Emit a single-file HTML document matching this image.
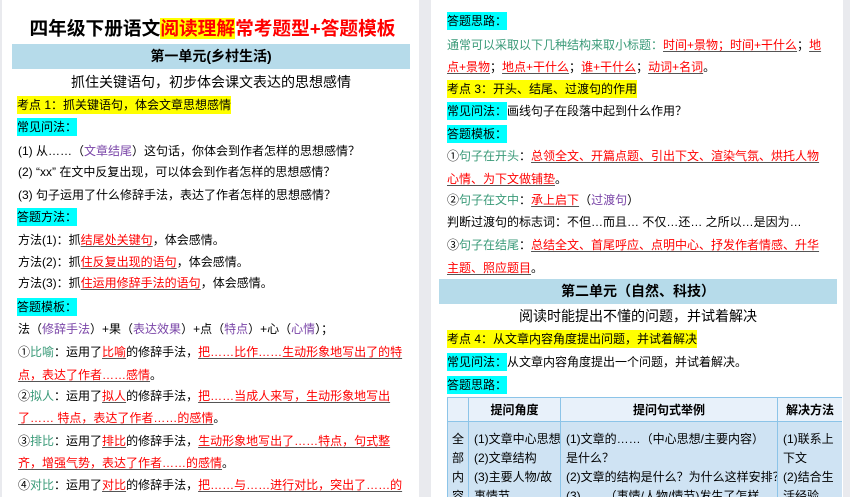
<!DOCTYPE html>
<html><head><meta charset="utf-8"><style>
html,body{margin:0;width:850px;height:497px;overflow:hidden}
body{background:#e9eaee;font-family:"Liberation Sans","Noto Sans CJK SC",sans-serif;color:#000;position:relative}
.pg{position:absolute;top:0;height:497px;background:#fff}
.l{position:absolute;white-space:nowrap;font-size:12px;line-height:18px;height:18px}
.y{background:#ffff00}
.c{background:#00ffff}
span.c{display:inline-block;height:18px;line-height:18px}
.r{color:#f00;text-decoration:underline;text-decoration-color:#555;text-underline-offset:2px}
.g{color:#3a9a78}
.p{color:#7a45a8}
.bar{position:absolute;background:#b6dbea;font-weight:bold;font-size:14px;text-align:center;line-height:25px;height:25px}
.sub{position:absolute;font-size:14px;text-align:center;line-height:20px}
.tw{position:absolute;left:447px;top:397px;width:395px;height:100px;overflow:hidden}
table{border-collapse:collapse;font-size:12px;table-layout:fixed;width:395px}
td,th{border:1.5px solid #8cc4e8;vertical-align:top;padding:0 5px;white-space:nowrap;overflow:hidden}
th{background:#e8f1fa;height:23px;vertical-align:middle;font-weight:bold}
td{background:#cfe3f3;line-height:19px;padding-top:8px}
</style></head><body>
<div class="pg" style="left:2px;width:417px"></div>
<div class="pg" style="left:431px;width:412px"></div>

<div style="position:absolute;left:0;width:425px;top:16px;text-align:center;font-size:18.7px;font-weight:bold;line-height:26px">四年级下册语文<span style="color:#f00;background:#ffff00">阅读理解</span><span style="color:#f00">常考题型+答题模板</span></div>
<div class="bar" style="left:12px;width:398px;top:44px">第一单元(乡村生活)</div>
<div class="sub" style="left:12px;width:398px;top:72px">抓住关键语句，初步体会课文表达的思想感情</div>
<div class="l y" style="left:17px;top:96px">考点 1：抓关键语句，体会文章思想感情</div>
<div class="l c" style="left:17px;top:118px">常见问法：</div>
<div class="l" style="left:18px;top:142px">(1) 从……（<span class="p">文章结尾</span>）这句话，你体会到作者怎样的思想感情？</div>
<div class="l" style="left:18px;top:163px">(2) “xx” 在文中反复出现，可以体会到作者怎样的思想感情？</div>
<div class="l" style="left:18px;top:186px">(3) 句子运用了什么修辞手法，表达了作者怎样的思想感情？</div>
<div class="l c" style="left:17px;top:208px">答题方法：</div>
<div class="l" style="left:18px;top:231px">方法(1)：抓<span class="r">结尾处关键句</span>，体会感情。</div>
<div class="l" style="left:18px;top:253px">方法(2)：抓<span class="r">住反复出现的语句</span>，体会感情。</div>
<div class="l" style="left:18px;top:274px">方法(3)：抓<span class="r">住运用修辞手法的语句</span>，体会感情。</div>
<div class="l c" style="left:17px;top:298px">答题模板：</div>
<div class="l" style="left:18px;top:320px">法（<span class="p">修辞手法</span>）+果（<span class="p">表达效果</span>）+点（<span class="p">特点</span>）+心（<span class="p">心情</span>）；</div>
<div class="l" style="left:18px;top:343px">①<span class="g">比喻</span>：运用了<span class="r">比喻</span>的修辞手法，<span class="r">把……比作……生动形象地写出了的特</span></div>
<div class="l" style="left:18px;top:366px"><span class="r">点，表达了作者……感情</span>。</div>
<div class="l" style="left:18px;top:387px">②<span class="g">拟人</span>：运用了<span class="r">拟人</span>的修辞手法，<span class="r">把……当成人来写，生动形象地写出</span></div>
<div class="l" style="left:18px;top:409px"><span class="r">了…… 特点，表达了作者……的感情</span>。</div>
<div class="l" style="left:18px;top:432px">③<span class="g">排比</span>：运用了<span class="r">排比</span>的修辞手法，<span class="r">生动形象地写出了……特点，句式整</span></div>
<div class="l" style="left:18px;top:454px"><span class="r">齐，增强气势，表达了作者……的感情</span>。</div>
<div class="l" style="left:18px;top:476px">④<span class="g">对比</span>：运用了<span class="r">对比</span>的修辞手法，<span class="r">把……与……进行对比，突出了……的</span></div>

<div class="l c" style="left:447px;top:12px">答题思路：</div>
<div class="l" style="left:447px;top:36px"><span class="g">通常可以采取以下几种结构来取小标题：</span><span class="r">时间+景物；时间+干什么</span>；<span class="r">地</span></div>
<div class="l" style="left:447px;top:58px"><span class="r">点+景物</span>；<span class="r">地点+干什么</span>；<span class="r">谁+干什么</span>；<span class="r">动词+名词</span>。</div>
<div class="l y" style="left:447px;top:80px">考点 3：开头、结尾、过渡句的作用</div>
<div class="l" style="left:447px;top:102px"><span class="c">常见问法：</span>画线句子在段落中起到什么作用？</div>
<div class="l c" style="left:447px;top:125px">答题模板：</div>
<div class="l" style="left:447px;top:147px">①<span class="g">句子在开头</span>：<span class="r">总领全文、开篇点题、引出下文、渲染气氛、烘托人物</span></div>
<div class="l" style="left:447px;top:170px"><span class="r">心情、为下文做铺垫</span>。</div>
<div class="l" style="left:447px;top:191px">②<span class="g">句子在文中</span>：<span class="r">承上启下</span>（<span class="p">过渡句</span>）</div>
<div class="l" style="left:447px;top:213px">判断过渡句的标志词：不但…而且… 不仅…还… 之所以…是因为…</div>
<div class="l" style="left:447px;top:236px">③<span class="g">句子在结尾</span>：<span class="r">总结全文、首尾呼应、点明中心、抒发作者情感、升华</span></div>
<div class="l" style="left:447px;top:259px"><span class="r">主题、照应题目</span>。</div>
<div class="bar" style="left:439px;width:398px;top:279px">第二单元（自然、科技）</div>
<div class="sub" style="left:439px;width:398px;top:306px">阅读时能提出不懂的问题，并试着解决</div>
<div class="l y" style="left:447px;top:330px">考点 4：从文章内容角度提出问题，并试着解决</div>
<div class="l" style="left:447px;top:353px"><span class="c">常见问法：</span>从文章内容角度提出一个问题，并试着解决。</div>
<div class="l c" style="left:447px;top:376px">答题思路：</div>
<div class="tw"><table>
<colgroup><col style="width:21px"><col style="width:92px"><col style="width:217px"><col style="width:65px"></colgroup>
<tr><th></th><th>提问角度</th><th>提问句式举例</th><th>解决方法</th></tr>
<tr><td style="padding:8px 4px">全<br>部<br>内<br>容</td><td>(1)文章中心思想<br>(2)文章结构<br>(3)主要人物/故<br>事情节</td><td>(1)文章的……（中心思想/主要内容）<br>是什么？<br>(2)文章的结构是什么？为什么这样安排？<br>(3)……（事情/人物/情节)发生了怎样</td><td>(1)联系上<br>下文<br>(2)结合生<br>活经验</td></tr>
</table></div>
</body></html>
